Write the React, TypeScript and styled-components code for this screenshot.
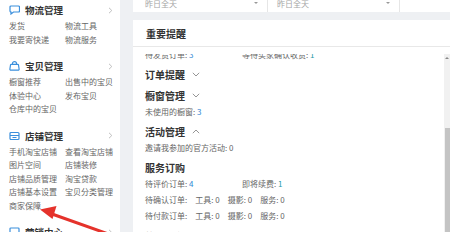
import styled, { createGlobalStyle } from "styled-components";

const GlobalStyle = createGlobalStyle`
  html, body { margin: 0; padding: 0; }
  body {
    width: 450px;
    height: 232px;
    overflow: hidden;
    background: #eef0f3;
    font-family: "Noto Sans CJK SC", "Noto Sans", sans-serif;
    color: #555;
  }
`;

const Page = styled.div`
  position: relative;
  display: flex;
  gap: 13px;
  height: 232px;
  overflow: hidden;
`;

const Sidebar = styled.div`
  width: 120px;
  flex-shrink: 0;
  box-sizing: border-box;
  padding: 1px 7px 0 9px;
  background: #fff;
`;

const Section = styled.div`
  padding-bottom: 11px;
`;

const SectionHead = styled.div`
  display: flex;
  align-items: center;
  gap: 5px;
  height: 18px;
`;

const HeadTitle = styled.div`
  flex: 1;
  font-size: 9.5px;
  font-weight: bold;
  color: #333;
`;

const ItemGrid = styled.div`
  display: grid;
  grid-template-columns: 56px 1fr;
  font-size: 8px;
  line-height: 13.5px;
  color: #666;
  white-space: nowrap;
`;

const Main = styled.div`
  flex: 1;
  min-width: 0;
  display: flex;
  flex-direction: column;
  gap: 8px;
`;

const TopBar = styled.div`
  height: 12px;
  flex-shrink: 0;
  display: flex;
  background: #fff;
`;

const Select = styled.div<{ w: number; pl: number }>`
  width: ${(p) => p.w}px;
  height: 12px;
  box-sizing: border-box;
  padding: 0 9px 6px ${(p) => p.pl}px;
  border-right: 1px solid #e6e6e6;
  display: flex;
  align-items: center;
  justify-content: space-between;
  font-size: 8px;
  color: #a5a5a5;
`;

const Caret = styled.span`
  width: 0;
  height: 0;
  border-left: 2px solid transparent;
  border-right: 2px solid transparent;
  border-top: 2px solid #999;
`;

const Card = styled.div`
  flex: 1;
  min-height: 0;
  display: flex;
  flex-direction: column;
  background: #fff;
`;

const CardHead = styled.div`
  height: 26px;
  flex-shrink: 0;
  display: flex;
  align-items: center;
  padding-left: 13px;
  border-bottom: 1px solid #e8e8e8;
  font-size: 10px;
  font-weight: bold;
  color: #333;
`;

const CardBody = styled.div`
  flex: 1;
  min-height: 0;
  display: flex;
  padding-top: 7px;
`;

const ScrollArea = styled.div`
  flex: 1;
  overflow: hidden;
  padding-left: 12px;
`;

const List = styled.div`
  margin-top: -7.5px;
`;

const Group = styled.div`
  padding-bottom: 5px;
`;

const GroupHead = styled.div`
  height: 16px;
  display: flex;
  align-items: center;
  gap: 7px;
  font-size: 10px;
  font-weight: bold;
  color: #333;
`;

const Line = styled.div<{ h?: number }>`
  height: ${(p) => p.h ?? 15}px;
  display: flex;
  align-items: center;
  font-size: 8px;
  color: #666;
  white-space: nowrap;
`;

const Cell = styled.span<{ w?: number }>`
  width: ${(p) => (p.w ? `${p.w}px` : "auto")};
  margin-right: ${(p) => (p.w ? 0 : 8)}px;
`;

const Num = styled.span<{ teal?: boolean }>`
  color: ${(p) => (p.teal ? "#1f9aa6" : "#2f86d4")};
`;

const ScrollBar = styled.div`
  width: 6px;
  flex-shrink: 0;
  display: flex;
  flex-direction: column;
  background: #f1f1f1;
`;

const ScrollBtn = styled.div`
  height: 8px;
  display: flex;
  align-items: center;
  justify-content: center;
  &::before {
    content: "";
    border-left: 2px solid transparent;
    border-right: 2px solid transparent;
    border-bottom: 2px solid #888;
  }
`;

const Thumb = styled.div`
  flex: 1;
  margin: 66px 0.5px 0;
  background: #c4c4c4;
`;

const Overlay = styled.svg`
  position: absolute;
  left: 0;
  top: 0;
  pointer-events: none;
`;

const blue = "#3b8fdc";

const ChatIcon = () => (
  <svg width="11" height="10" viewBox="0 0 11 10" fill="none" stroke={blue} strokeWidth="1.2">
    <path d="M2 1h7.5a1 1 0 0 1 1 1v4a1 1 0 0 1-1 1H4.5L2 9V7h0a1 1 0 0 1-1-1V2a1 1 0 0 1 1-1z" />
  </svg>
);

const BagIcon = () => (
  <svg width="11" height="10" viewBox="0 0 11 10" fill="none" stroke={blue} strokeWidth="1.2">
    <path d="M3.5 3.5V2.6a2 2 0 0 1 4 0v0.9" />
    <path d="M1.5 4a0.8 0.8 0 0 1 0.8-0.6h6.4a0.8 0.8 0 0 1 0.8 0.6l0.6 4a1 1 0 0 1-1 1.2H1.9a1 1 0 0 1-1-1.2z" />
  </svg>
);

const ShopIcon = () => (
  <svg width="11" height="10" viewBox="0 0 11 10" fill="none" stroke={blue} strokeWidth="1.2">
    <rect x="1" y="1.5" width="9" height="7" rx="1" />
    <path d="M1 4.5h9M3.5 6.5h4" />
  </svg>
);

const ScreenIcon = () => (
  <svg width="11" height="10" viewBox="0 0 11 10" fill="none" stroke={blue} strokeWidth="1.2">
    <rect x="1" y="1" width="9" height="6" rx="0.8" />
    <path d="M3.5 9h4M5.5 7v2" />
  </svg>
);

const Right = () => (
  <svg width="5" height="7" viewBox="0 0 5 7" fill="none" stroke="#b8b8b8" strokeWidth="0.9">
    <path d="M1 0.8l2.8 2.7L1 6.2" />
  </svg>
);

const Down = ({ up }: { up?: boolean }) => (
  <svg width="8" height="5" viewBox="0 0 8 5" fill="none" stroke="#8a8a8a" strokeWidth="0.9">
    <path d={up ? "M0.8 4.2L4 1l3.2 3.2" : "M0.8 0.8L4 4l3.2-3.2"} />
  </svg>
);

const menu = [
  { icon: <ChatIcon />, title: "物流管理", items: ["发货", "物流工具", "我要寄快递", "物流服务"] },
  { icon: <BagIcon />, title: "宝贝管理", items: ["橱窗推荐", "出售中的宝贝", "体验中心", "发布宝贝", "仓库中的宝贝"] },
  {
    icon: <ShopIcon />,
    title: "店铺管理",
    items: ["手机淘宝店铺", "查看淘宝店铺", "图片空间", "店铺装修", "店铺品质管理", "淘宝贷款", "店铺基本设置", "宝贝分类管理", "商家保障"],
  },
  { icon: <ScreenIcon />, title: "营销中心", items: [] },
];

function App() {
  return (
    <>
      <GlobalStyle />
      <Page>
        <Sidebar>
          {menu.map((s) => (
            <Section key={s.title}>
              <SectionHead>
                {s.icon}
                <HeadTitle>{s.title}</HeadTitle>
                <Right />
              </SectionHead>
              <ItemGrid>
                {s.items.map((it) => (
                  <span key={it}>{it}</span>
                ))}
              </ItemGrid>
            </Section>
          ))}
        </Sidebar>
        <Main>
          <TopBar>
            <Select w={135} pl={12}>
              昨日全天
              <Caret />
            </Select>
            <Select w={132} pl={9}>
              昨日全天
              <Caret />
            </Select>
          </TopBar>
          <Card>
            <CardHead>重要提醒</CardHead>
            <CardBody>
              <ScrollArea>
                <List>
                  <Group>
                    <Line>
                      <Cell w={97}>
                        待发货订单: <Num>3</Num>
                      </Cell>
                      <Cell>
                        等待买家确认收货: <Num teal>1</Num>
                      </Cell>
                    </Line>
                  </Group>
                  <Group>
                    <GroupHead>
                      订单提醒 <Down />
                    </GroupHead>
                  </Group>
                  <Group>
                    <GroupHead>
                      橱窗管理 <Down />
                    </GroupHead>
                    <Line>
                      未使用的橱窗: <Num>&nbsp;3</Num>
                    </Line>
                  </Group>
                  <Group>
                    <GroupHead>
                      活动管理 <Down up />
                    </GroupHead>
                    <Line>邀请我参加的官方活动: 0</Line>
                  </Group>
                  <Group>
                    <GroupHead>服务订购</GroupHead>
                    <Line h={16}>
                      <Cell w={97}>
                        待评价订单: <Num>4</Num>
                      </Cell>
                      <Cell>
                        即将续费: <Num teal>1</Num>
                      </Cell>
                    </Line>
                    <Line h={16}>
                      <Cell>待确认订单:</Cell>
                      <Cell>工具: 0</Cell>
                      <Cell>摄影: 0</Cell>
                      <Cell>服务: 0</Cell>
                    </Line>
                    <Line h={16}>
                      <Cell>待付款订单:</Cell>
                      <Cell>工具: 0</Cell>
                      <Cell>摄影: 0</Cell>
                      <Cell>服务: 0</Cell>
                    </Line>
                  </Group>
                  <Group>
                    <GroupHead>软件服务</GroupHead>
                  </Group>
                </List>
              </ScrollArea>
              <ScrollBar>
                <ScrollBtn />
                <Thumb />
              </ScrollBar>
            </CardBody>
          </Card>
        </Main>
        <Overlay width="450" height="232" viewBox="0 0 450 232">
          <line x1="114" y1="236" x2="52" y2="214" stroke="#e5322b" strokeWidth="3" strokeLinecap="round" />
          <polygon points="40,209.5 56.5,206 52.5,219" fill="#e5322b" />
        </Overlay>
      </Page>
    </>
  );
}

export default App;
